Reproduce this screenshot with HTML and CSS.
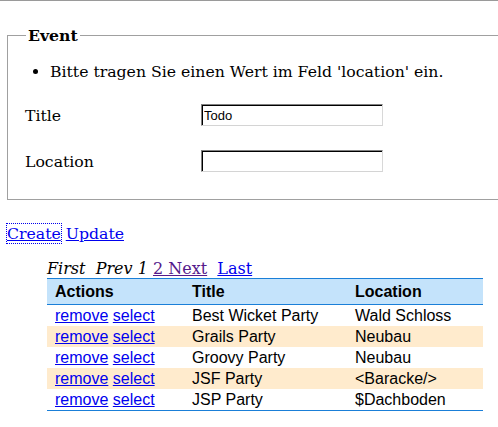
FILE: index.html
```html
<!DOCTYPE html>
<html>
<head>
<meta charset="utf-8">
<link rel="stylesheet" href="styles.css">
</head>
<body>
<div class="topline"></div>
<form class="form">
  <fieldset class="box">
    <legend class="legend">Event</legend>
    <ul class="errors"><li>Bitte tragen Sie einen Wert im Feld 'location' ein.</li></ul>
    <div class="field"><label class="label">Title</label><input class="input" type="text" value="Todo"></div>
    <div class="field"><label class="label">Location</label><input class="input" type="text" value=""></div>
  </fieldset>
</form>
<div class="actions"><a href="#" class="link focused">Create</a> <a href="#" class="link">Update</a></div>
<div class="listing">
  <div class="pager"><span class="cur">First</span>&nbsp; <span class="cur">Prev</span> <span class="cur">1</span> <a href="#" class="visited">2 Next</a>&nbsp; <a href="#" class="link">Last</a></div>
  <table class="grid">
    <thead>
      <tr><th class="c1">Actions</th><th class="c2">Title</th><th class="c3">Location</th></tr>
    </thead>
    <tbody>
      <tr><td><a href="#" class="link">remove</a> <a href="#" class="link">select</a></td><td>Best Wicket Party</td><td>Wald Schloss</td></tr>
      <tr class="odd"><td><a href="#" class="link">remove</a> <a href="#" class="link">select</a></td><td>Grails Party</td><td>Neubau</td></tr>
      <tr><td><a href="#" class="link">remove</a> <a href="#" class="link">select</a></td><td>Groovy Party</td><td>Neubau</td></tr>
      <tr class="odd"><td><a href="#" class="link">remove</a> <a href="#" class="link">select</a></td><td>JSF Party</td><td>&lt;Baracke/&gt;</td></tr>
      <tr><td><a href="#" class="link">remove</a> <a href="#" class="link">select</a></td><td>JSP Party</td><td>$Dachboden</td></tr>
    </tbody>
  </table>
</div>
</body>
</html>
```
FILE: styles.css
```css
html, body {
  margin: 0;
  padding: 0;
  overflow: hidden;
  background: #fff;
}
body {
  font-family: "DejaVu Serif", serif;
  font-size: 15.7px;
  color: #000;
}
.topline {
  height: 0;
  border-top: 1px solid #9a9a9a;
}
.form {
  margin: 25px 0 0 7px;
}
.box {
  margin: 0;
  padding: 0 0 27px 17px;
  border: 1px solid #a0a0a0;
  border-right: none;
}
.legend {
  font-weight: bold;
  padding: 0 2px;
  margin-left: 1px;
  line-height: 19px;
}
.errors {
  margin: 17px 0 0 0;
  padding-left: 25px;
  line-height: 19px;
}
.field {
  display: flex;
  align-items: flex-start;
  margin-top: 25px;
}
.field + .field {
  margin-top: 26px;
}
.label {
  width: 176px;
  line-height: 19px;
}
.input {
  box-sizing: border-box;
  width: 182px;
  height: 22px;
  margin: -2px 0 0 0;
  padding: 0 2px;
  font-family: "Liberation Sans", Arial, sans-serif;
  font-size: 13px;
  border: 1px solid;
  border-color: #808080 #d8d8d8 #d4d4d4 #808080;
  box-shadow: inset 1px 1px 0 #000;
  background: #fff;
  outline: none;
}
.actions {
  margin: 24px 0 0 7px;
  line-height: 19px;
}
.link {
  color: #0000ee;
}
.visited {
  color: #551a8b;
}
.focused {
  outline: 1px dotted #0000ee;
  outline-offset: 0;
}
.listing {
  margin: 17px 0 0 47px;
}
.pager {
  font-size: 16px;
  line-height: 18px;
}
.cur {
  font-style: italic;
}
.grid {
  width: 436px;
  border-collapse: collapse;
  font-family: "Liberation Sans", Arial, sans-serif;
  font-size: 16px;
  border-top: 1px solid #1a7fd8;
  border-bottom: 1px solid #1a7fd8;
}
.grid th {
  text-align: left;
  font-weight: bold;
  background: #c4e3fb;
  padding: 3px 8px;
  line-height: 19px;
  border-bottom: 1px solid #1a7fd8;
}
.grid td {
  padding: 1px 8px;
  line-height: 19px;
}
.c1 { width: 121px; }
.c2 { width: 147px; }
.c3 { width: 120px; }
.odd td {
  background: #ffebcd;
}
```
